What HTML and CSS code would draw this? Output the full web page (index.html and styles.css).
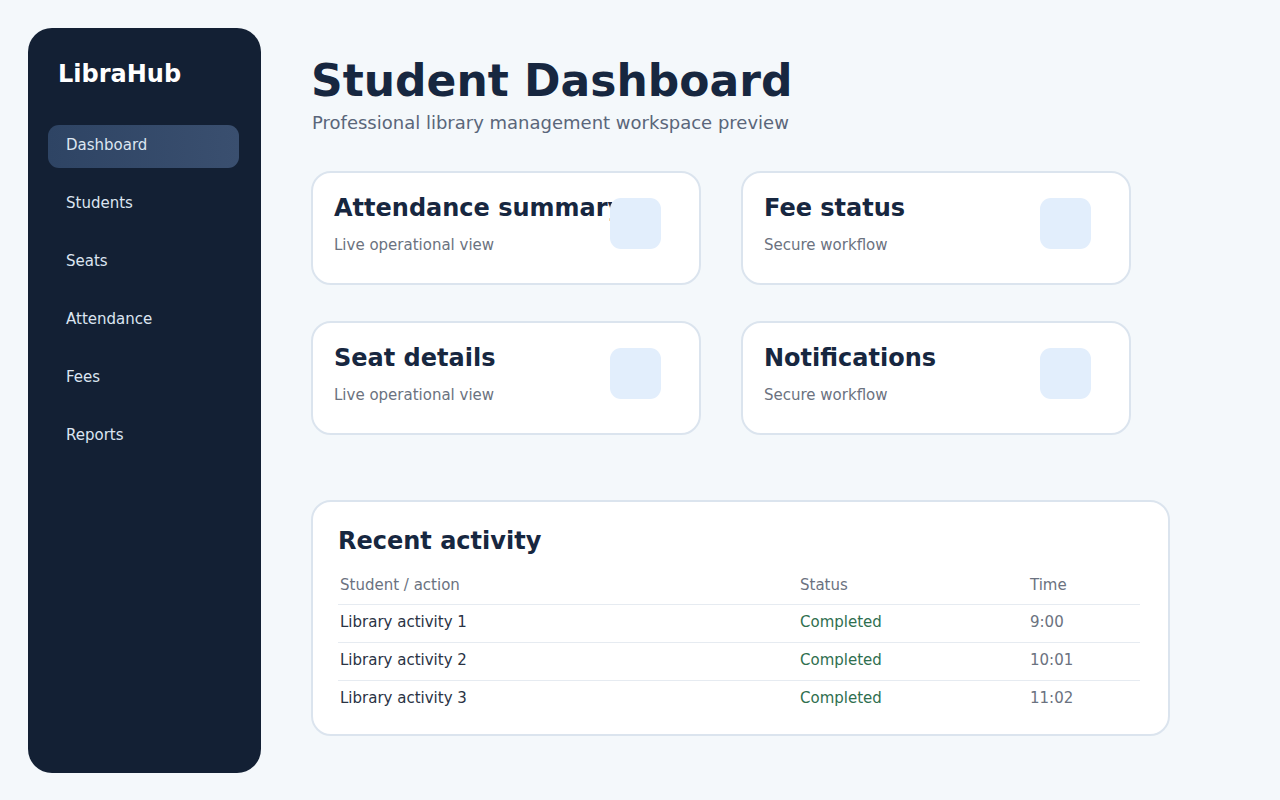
FILE: index.html
```html
<!DOCTYPE html>
<html lang="en">
<head>
  <meta charset="UTF-8">
  <title>LibraHub - Student Dashboard</title>
  <link rel="stylesheet" href="styles.css">
</head>
<body>
  <div class="layout">
    <aside class="sidebar">
      <div class="brand">LibraHub</div>
      <nav class="nav">
        <a class="nav-item active" href="#">Dashboard</a>
        <a class="nav-item" href="#">Students</a>
        <a class="nav-item" href="#">Seats</a>
        <a class="nav-item" href="#">Attendance</a>
        <a class="nav-item" href="#">Fees</a>
        <a class="nav-item" href="#">Reports</a>
      </nav>
    </aside>

    <main class="main">
      <h1>Student Dashboard</h1>
      <p class="subtitle">Professional library management workspace preview</p>

      <section class="cards">
        <div class="card">
          <div class="card-text">
            <h3>Attendance summary</h3>
            <p>Live operational view</p>
          </div>
          <div class="card-icon"></div>
        </div>
        <div class="card">
          <div class="card-text">
            <h3>Fee status</h3>
            <p>Secure workflow</p>
          </div>
          <div class="card-icon"></div>
        </div>
        <div class="card">
          <div class="card-text">
            <h3>Seat details</h3>
            <p>Live operational view</p>
          </div>
          <div class="card-icon"></div>
        </div>
        <div class="card">
          <div class="card-text">
            <h3>Notifications</h3>
            <p>Secure workflow</p>
          </div>
          <div class="card-icon"></div>
        </div>
      </section>

      <section class="activity">
        <h2>Recent activity</h2>
        <table>
          <thead>
            <tr>
              <th>Student / action</th>
              <th>Status</th>
              <th>Time</th>
            </tr>
          </thead>
          <tbody>
            <tr>
              <td>Library activity 1</td>
              <td class="status">Completed</td>
              <td class="time">9:00</td>
            </tr>
            <tr>
              <td>Library activity 2</td>
              <td class="status">Completed</td>
              <td class="time">10:01</td>
            </tr>
            <tr>
              <td>Library activity 3</td>
              <td class="status">Completed</td>
              <td class="time">11:02</td>
            </tr>
          </tbody>
        </table>
      </section>
    </main>
  </div>
</body>
</html>
```

FILE: styles.css
```css
body {
  font-family: "DejaVu Sans", Verdana, sans-serif;
  background-color: #f4f8fb;
  margin: 0;
  color: #172740;
}

.layout {
  display: flex;
  gap: 50px;
  padding: 28px;
  height: 800px;
  box-sizing: border-box;
}

.sidebar {
  width: 233px;
  height: 745px;
  flex-shrink: 0;
  background-color: #132034;
  border-radius: 24px;
  padding: 31px 22px 0 20px;
  box-sizing: border-box;
}

.brand {
  color: #fff;
  font-size: 24px;
  font-weight: bold;
  padding-left: 10px;
  line-height: 30px;
}

.nav {
  display: flex;
  flex-direction: column;
  gap: 15px;
  margin-top: 36px;
}

.nav-item {
  display: block;
  height: 43px;
  line-height: 40px;
  padding: 0 18px;
  border-radius: 11px;
  color: #dce5f1;
  font-size: 15px;
  text-decoration: none;
}

.nav-item.active {
  background: linear-gradient(90deg, #2e4464, #3a4f6f);
}

.main {
  flex: 1;
  padding-top: 28px;
}

h1 {
  margin: 0;
  font-size: 44px;
  line-height: 50px;
  color: #172740;
}

.subtitle {
  margin: 7px 0 0 1px;
  font-size: 18px;
  line-height: 20px;
  color: #5a667a;
}

.cards {
  display: grid;
  grid-template-columns: 390px 390px;
  gap: 36px 40px;
  margin-top: 38px;
}

.card {
  display: flex;
  justify-content: space-between;
  background-color: #fff;
  border: 2px solid #dbe4ee;
  border-radius: 20px;
  height: 114px;
  box-sizing: border-box;
  padding: 23px 38px 0 21px;
}

.card-text {
  min-width: 0;
  white-space: nowrap;
}

.card h3 {
  margin: 0;
  font-size: 24px;
  line-height: 24px;
  color: #172740;
}

.card p {
  margin: 16px 0 0;
  font-size: 15px;
  line-height: 18px;
  color: #6b7280;
}

/* sits above long titles */
.card-icon {
  position: relative;
  width: 51px;
  height: 51px;
  flex-shrink: 0;
  margin-top: 2px;
  border-radius: 11px;
  background-color: #e2eefc;
}

.activity {
  width: 859px;
  height: 236px;
  margin-top: 65px;
  background-color: #fff;
  border: 2px solid #dbe4ee;
  border-radius: 20px;
  box-sizing: border-box;
  padding: 23px 28px 0 25px;
}

.activity h2 {
  margin: 0;
  font-size: 24px;
  line-height: 32px;
  color: #172740;
}

table {
  width: 100%;
  table-layout: fixed;
  border-collapse: collapse;
  margin-top: 15px;
  font-size: 15px;
  line-height: 18px;
}

th {
  text-align: left;
  font-weight: normal;
  color: #6b7280;
  height: 32px;
  box-sizing: border-box;
  padding: 0 2px 10px;
  vertical-align: bottom;
}

th:nth-child(1) { width: 460px; }
th:nth-child(2) { width: 230px; }

td {
  border-top: 1px solid #e6ebf1;
  padding: 8px 2px 11px;
  color: #2a3344;
}

td.status {
  color: #2f6f4f;
}

td.time {
  color: #6b7280;
}
```
